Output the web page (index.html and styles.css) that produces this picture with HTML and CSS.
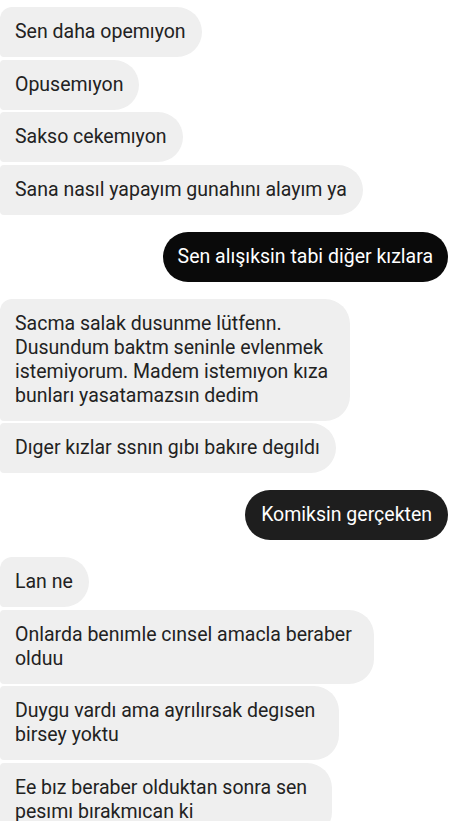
FILE: index.html
```html
<!DOCTYPE html>
<html lang="tr">
<head>
<meta charset="utf-8">
<title>Chat</title>
<link rel="stylesheet" href="styles.css">
</head>
<body>
<div class="thread">
  <div class="group in">
    <div class="bubble">Sen daha opemıyon</div>
    <div class="bubble">Opusemıyon</div>
    <div class="bubble">Sakso cekemıyon</div>
    <div class="bubble">Sana nasıl yapayım gunahını alayım ya</div>
  </div>
  <div class="group out">
    <div class="bubble dark">Sen alışıksin tabi diğer kızlara</div>
  </div>
  <div class="group in">
    <div class="bubble wide">Sacma salak dusunme lütfenn. Dusundum baktm seninle evlenmek istemiyorum. Madem istemıyon kıza bunları yasatamazsın dedim</div>
    <div class="bubble">Dıger kızlar ssnın gıbı bakıre degıldı</div>
  </div>
  <div class="group out">
    <div class="bubble">Komiksin gerçekten</div>
  </div>
  <div class="group in">
    <div class="bubble">Lan ne</div>
    <div class="bubble w-onl">Onlarda benımle cınsel amacla beraber olduu</div>
    <div class="bubble w-duy">Duygu vardı ama ayrılırsak degısen birsey yoktu</div>
    <div class="bubble w-ee">Ee bız beraber olduktan sonra sen pesımı bırakmıcan ki</div>
  </div>
</div>
</body>
</html>
```
FILE: styles.css
```css
html, body {
  margin: 0;
  padding: 0;
  background: #ffffff;
}
body {
  font-family: Roboto, "Noto Sans", sans-serif;
  font-size: 19.5px;
  line-height: 24px;
  width: 450px;
  height: 821px;
  overflow: hidden;
}
.thread {
  display: flex;
  flex-direction: column;
  gap: 17px;
  padding: 7px 2px 0 0;
}
.group {
  display: flex;
  flex-direction: column;
  gap: 2.5px;
}
.group.in {
  align-items: flex-start;
}
.group.out {
  align-items: flex-end;
}
.bubble {
  padding: 13px 16px 13px 15px;
  border-radius: 25px;
  box-sizing: border-box;
}
.in .bubble {
  background: #efefef;
  color: #222222;
  border-radius: 4px 25px 25px 4px;
}
.in .bubble:first-child {
  border-top-left-radius: 12px;
}
.out .bubble {
  background: #1e1e1e;
  color: #ffffff;
  padding: 13px 16px;
}
.out .bubble.dark {
  background: #0a0a0a;
  padding: 13px 15px;
}
.wide {
  max-width: 350px;
}
.w-onl {
  max-width: 374px;
}
.w-duy {
  max-width: 339px;
}
.w-ee {
  max-width: 332px;
}
```
